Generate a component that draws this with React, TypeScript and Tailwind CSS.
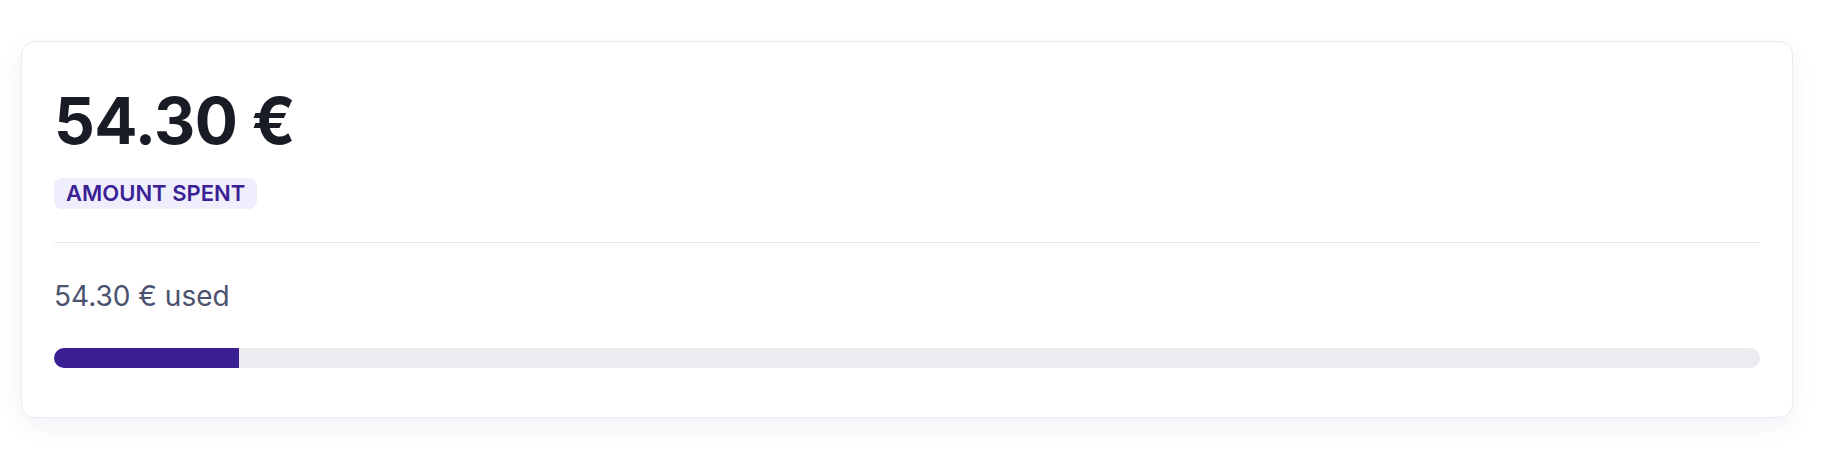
const spent = 54.3;
const budget = 500;

export default function App() {
  const pct = Math.min(100, (spent / budget) * 100);

  return (
    <div
      className="min-h-[452px] bg-white pl-[21px] pr-[33px] pt-[41px]"
      style={{ fontFamily: "Inter, 'Noto Sans', sans-serif" }}
    >
      <div className="rounded-[14px] border border-[#ebe9f2] bg-white px-8 pt-[47px] pb-[49px] shadow-[0_8px_24px_rgba(30,20,80,0.06)]">
        <div className="text-[64px] font-bold leading-none tracking-[-0.01em] text-[#1a1c25]">
          54.30 €
        </div>
        <div className="mt-[25px]">
          <span className="inline-block h-[31px] rounded-[8px] bg-[#f0eefc] px-[12px] text-[22px] font-semibold leading-[31px] text-[#3b1f94]">
            AMOUNT SPENT
          </span>
        </div>
        <div className="mt-[33px] h-px bg-[#e8e8ef]" />
        <div className="mt-[34px] text-[28px] leading-[39px] text-[#4b5270]">
          54.30 € used
        </div>
        <div className="mt-[32px] flex h-[20px] overflow-hidden rounded-full bg-[#ebebf0]">
          <div className="h-full bg-[#3a1f93]" style={{ width: `${pct}%` }} />
        </div>
      </div>
    </div>
  );
}
